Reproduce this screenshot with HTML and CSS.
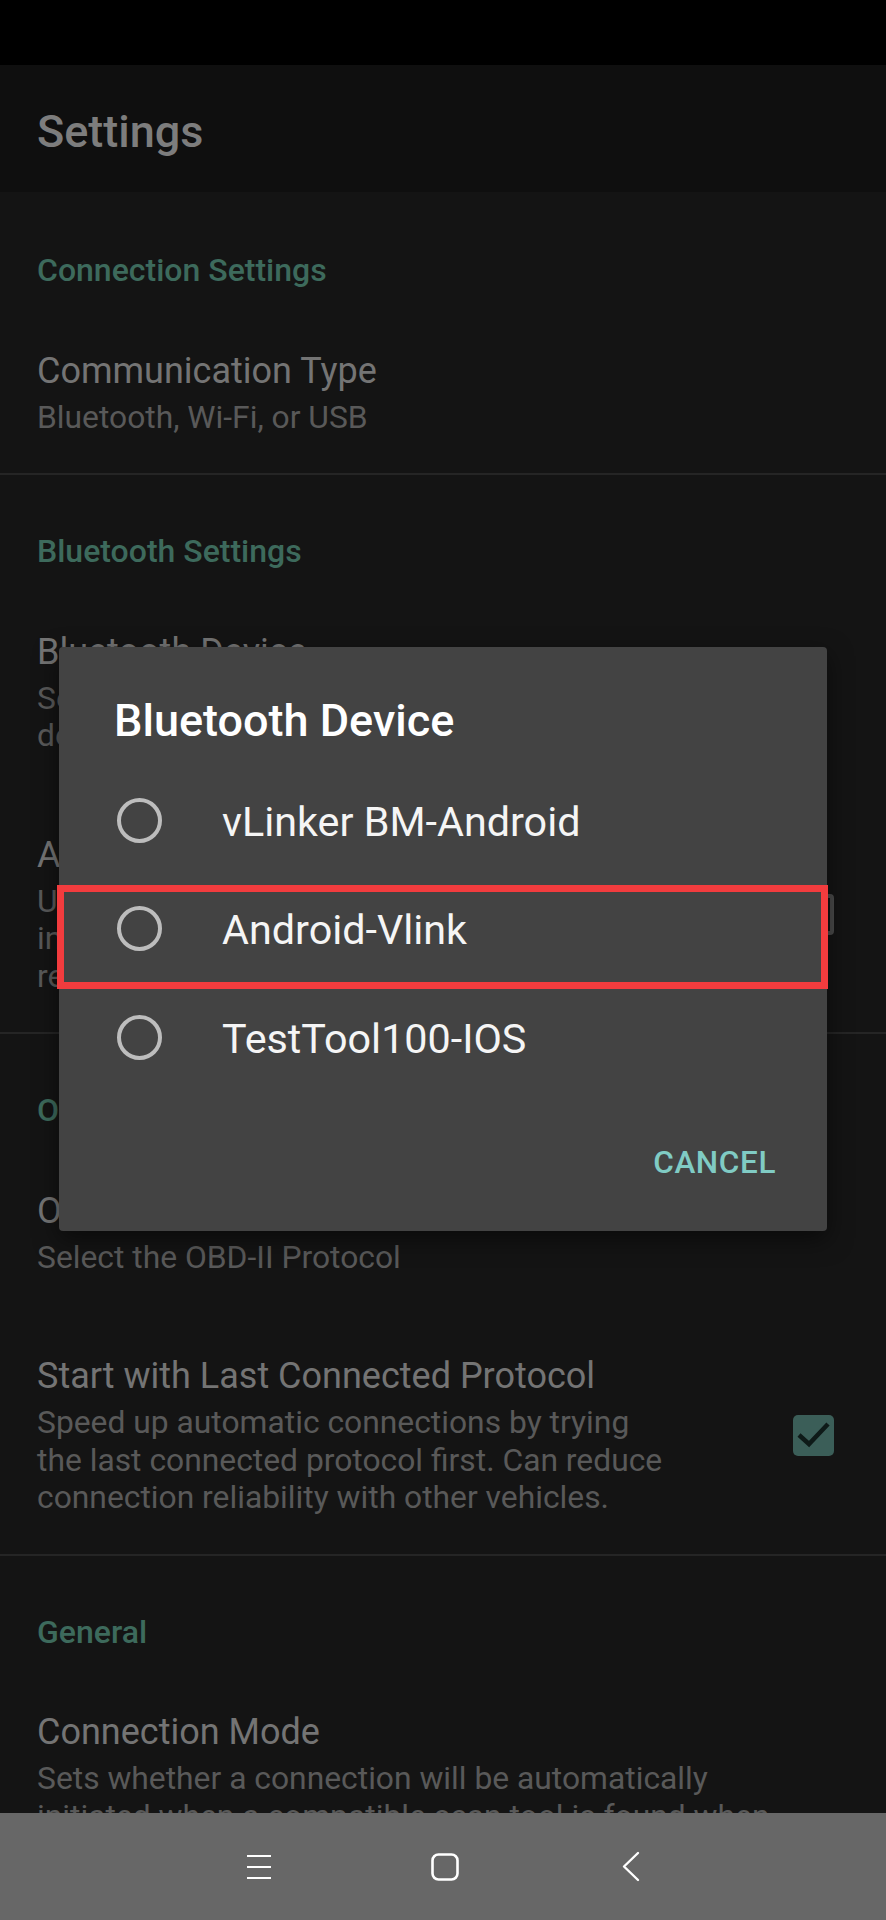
FILE: index.html
```html
<!DOCTYPE html>
<html lang="en">
<head>
    <meta charset="UTF-8">
    <meta name="viewport" content="width=device-width, initial-scale=1.0">
    <title>Settings</title>
    <link rel="stylesheet" href="styles.css">
</head>
<body>
    <div class="screen">
        <div class="status-bar"></div>

        <header class="app-bar">
            <h1>Settings</h1>
        </header>

        <main class="prefs">
            <section class="group">
                <h2 class="group-title">Connection Settings</h2>
                <div class="pref">
                    <div class="pref-text">
                        <div class="pref-title">Communication Type</div>
                        <div class="pref-summary">Bluetooth, Wi-Fi, or USB</div>
                    </div>
                </div>
            </section>

            <section class="group">
                <h2 class="group-title">Bluetooth Settings</h2>
                <div class="pref">
                    <div class="pref-text">
                        <div class="pref-title">Bluetooth Device</div>
                        <div class="pref-summary">Select the paired Bluetooth adapter<br>device to connect to</div>
                    </div>
                </div>
                <div class="pref">
                    <div class="pref-text">
                        <div class="pref-title">Auto-Connect to Device</div>
                        <div class="pref-summary">Use the selected device when connecting<br>instead of scanning. Disable if you have<br>reconnection problems.</div>
                    </div>
                    <span class="checkbox"></span>
                </div>
            </section>

            <section class="group">
                <h2 class="group-title">OBD Settings</h2>
                <div class="pref">
                    <div class="pref-text">
                        <div class="pref-title">OBD Protocol</div>
                        <div class="pref-summary">Select the OBD-II Protocol</div>
                    </div>
                </div>
                <div class="pref">
                    <div class="pref-text">
                        <div class="pref-title">Start with Last Connected Protocol</div>
                        <div class="pref-summary">Speed up automatic connections by trying the last connected protocol first. Can reduce connection reliability with other vehicles.</div>
                    </div>
                    <span class="checkbox checked">
                        <svg viewBox="0 0 41 41" width="41" height="41"><path d="M6 20 L16 29 L35 9" fill="none" stroke="#0e1a18" stroke-width="4.5"/></svg>
                    </span>
                </div>
            </section>

            <section class="group">
                <h2 class="group-title">General</h2>
                <div class="pref">
                    <div class="pref-text">
                        <div class="pref-title">Connection Mode</div>
                        <div class="pref-summary">Sets whether a connection will be automatically<br>initiated when a compatible scan tool is found when<br>the app is started.</div>
                    </div>
                </div>
            </section>
        </main>

        <nav class="nav-bar">
            <span class="nav-btn">
                <svg width="40" height="40" viewBox="0 0 40 40"><path d="M8 9 H32 M8 20 H32 M8 31 H32" stroke="#fff" stroke-width="2" fill="none"/></svg>
            </span>
            <span class="nav-btn">
                <svg width="40" height="40" viewBox="0 0 40 40"><rect x="7.5" y="7.5" width="25" height="25" rx="6" stroke="#fff" stroke-width="2.6" fill="none"/></svg>
            </span>
            <span class="nav-btn">
                <svg width="40" height="40" viewBox="0 0 40 40"><path d="M27 6 L13 19.5 L27 33" stroke="#fff" stroke-width="2.4" fill="none" stroke-linecap="round" stroke-linejoin="round"/></svg>
            </span>
        </nav>

        <div class="dialog">
            <h3 class="dialog-title">Bluetooth Device</h3>
            <div class="choices">
                <div class="choice"><span class="radio"></span><span class="choice-label">vLinker BM-Android</span></div>
                <div class="choice"><span class="radio"></span><span class="choice-label">Android-Vlink</span></div>
                <div class="choice"><span class="radio"></span><span class="choice-label">TestTool100-IOS</span></div>
            </div>
            <div class="dialog-actions">
                <span class="btn-text">CANCEL</span>
            </div>
            <div class="highlight"></div>
        </div>
    </div>
</body>
</html>
```

FILE: styles.css
```css
body {
    margin: 0;
    font-family: Roboto, "Liberation Sans", sans-serif;
    background-color: #141414;
}
.screen {
    position: relative;
    width: 886px;
    height: 1920px;
    display: flex;
    flex-direction: column;
    overflow: hidden;
    background-color: #141414;
}
.status-bar {
    height: 65px;
    flex-shrink: 0;
    background-color: #000;
}
.app-bar {
    height: 127px;
    flex-shrink: 0;
    box-sizing: border-box;
    padding: 40px 37px 0;
    background-color: #0f0f0f;
}
.app-bar h1 {
    margin: 0;
    font-size: 45px;
    line-height: 53px;
    font-weight: 500;
    color: #7d7d7d;
}
.prefs {
    flex: 1;
    min-height: 0;
    overflow: hidden;
}
.group {
    border-top: 2px solid #252525;
    padding-top: 58px;
}
.group:first-child {
    border-top-color: transparent;
}
.group-title {
    margin: 0;
    padding: 0 37px 18px;
    font-size: 32px;
    line-height: 37.5px;
    font-weight: 500;
    color: #3d6a5c;
}
.pref {
    display: flex;
    align-items: center;
    padding: 42px 52px 37px 37px;
}
.pref-text {
    flex: 1;
}
.pref-title {
    font-size: 36px;
    line-height: 43px;
    color: #747474;
}
.pref-summary {
    margin-top: 6px;
    font-size: 31.8px;
    line-height: 37.5px;
    color: #595959;
}
.checkbox {
    width: 41px;
    height: 41px;
    flex-shrink: 0;
    margin-left: 118px;
    box-sizing: border-box;
    border: 4px solid #4a4a4a;
    border-radius: 4px;
}
.checkbox.checked {
    border: none;
    border-radius: 5px;
    background-color: #3b5e58;
}
.checkbox svg {
    display: block;
}
.nav-bar {
    height: 107px;
    flex-shrink: 0;
    display: flex;
    justify-content: center;
    align-items: center;
    gap: 146px;
    padding-left: 3px;
    background-color: #676767;
}
.nav-btn {
    width: 40px;
    height: 40px;
}
.nav-btn svg {
    display: block;
}
.dialog {
    position: absolute;
    left: 59px;
    top: 647px;
    width: 768px;
    padding-top: 47px;
    background-color: #434343;
    border-radius: 4px;
    box-shadow: 0 8px 24px rgba(0,0,0,0.5);
}
.dialog-title {
    margin: 0 0 19px;
    padding-left: 55px;
    font-size: 45px;
    line-height: 53px;
    font-weight: 500;
    color: #fff;
}
.choice {
    height: 108.5px;
    display: flex;
    align-items: center;
    padding-left: 58px;
}
.radio {
    width: 45px;
    height: 45px;
    flex-shrink: 0;
    box-sizing: border-box;
    border: 4px solid #bdbdbd;
    border-radius: 50%;
    margin-right: 60px;
}
.choice-label {
    padding-top: 3px;
    font-size: 41.3px;
    color: #f5f5f5;
}
.dialog-actions {
    padding: 52.5px 51px 49px;
    text-align: right;
}
.btn-text {
    font-size: 31.5px;
    line-height: 37.5px;
    font-weight: 500;
    letter-spacing: 0.6px;
    color: #80cbc4;
}
.highlight {
    position: absolute;
    left: -2px;
    top: 238px;
    width: 771px;
    height: 104px;
    box-sizing: border-box;
    border: 7px solid #f23c3e;
}
```
